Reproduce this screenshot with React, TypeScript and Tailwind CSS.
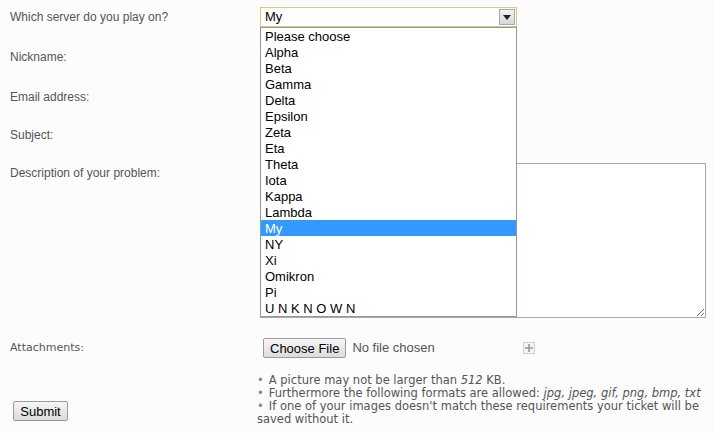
import React from "react";

const SERVERS = [
  "Please choose",
  "Alpha",
  "Beta",
  "Gamma",
  "Delta",
  "Epsilon",
  "Zeta",
  "Eta",
  "Theta",
  "Iota",
  "Kappa",
  "Lambda",
  "My",
  "NY",
  "Xi",
  "Omikron",
  "Pi",
  "U N K N O W N",
];

const labelCls =
  "w-[250px] shrink-0 pl-[10px] text-[12px] text-[#555] font-['Liberation_Sans',Arial,sans-serif]";

function Row({ label, className, children }: { label: string; className?: string; children?: React.ReactNode }) {
  return (
    <div className={`flex items-center ${className ?? ""}`}>
      <div className={labelCls}>{label}</div>
      <div className="flex-1">{children}</div>
    </div>
  );
}

function GreyButton({ children, className }: { children: React.ReactNode; className?: string }) {
  return (
    <button
      type="button"
      className={`h-[20px] rounded-[2px] border border-[#9a9a9a] bg-gradient-to-b from-[#f6f6f6] to-[#dcdcdc] px-[6px] text-[13px] leading-none text-black font-['Liberation_Sans',Arial,sans-serif] ${className ?? ""}`}
    >
      {children}
    </button>
  );
}

export default function App() {
  const selected = "My";

  return (
    <div className="relative h-[433px] w-[714px] overflow-hidden bg-[#fcfcfc] font-['Liberation_Sans',Arial,sans-serif]">
      <div className="flex flex-col pt-[7px]">
        {/* server select */}
        <Row label="Which server do you play on?" className="h-[20px]">
          <div className="relative ml-[10px] w-[257px]">
            <div className="flex h-[20px] items-center justify-between border border-[#e2c57a] bg-white pl-[4px] pr-[1px] text-[13px] text-black">
              <span>{selected}</span>
              <span className="flex h-[16px] w-[16px] items-center justify-center border border-[#a8a8a8] bg-gradient-to-b from-[#f4f4f4] to-[#d6d6d6]">
                <svg width="8" height="5" viewBox="0 0 8 5">
                  <path d="M0 0h8L4 5z" fill="#222" />
                </svg>
              </span>
            </div>

            {/* open option list, lies over the fields below */}
            <ul className="absolute left-0 top-[20px] z-10 w-[257px] border border-[#8a9aa8] bg-white text-[13px] text-black">
              {SERVERS.map((s) => (
                <li
                  key={s}
                  className={`flex h-[16px] items-center pl-[4px] pt-[1px] ${
                    s === selected ? "bg-[#3399ff] text-white" : ""
                  }`}
                >
                  {s}
                </li>
              ))}
            </ul>
          </div>
        </Row>

        <Row label="Nickname:" className="mt-[20px] h-[20px]">
          <input className="ml-[10px] h-[20px] w-[200px] border border-[#aaa] bg-white" />
        </Row>
        <Row label="Email address:" className="mt-[20px] h-[20px]">
          <input className="ml-[10px] h-[20px] w-[200px] border border-[#aaa] bg-white" />
        </Row>
        <Row label="Subject:" className="mt-[18px] h-[20px]">
          <input className="ml-[10px] h-[20px] w-[200px] border border-[#aaa] bg-white" />
        </Row>

        {/* description */}
        <div className="mt-[18px] flex items-start">
          <div className={`${labelCls} pt-[1px]`}>Description of your problem:</div>
          <textarea className="ml-[10px] h-[155px] w-[446px] resize border border-[#a9a9a9] bg-white" />
        </div>

        {/* attachments */}
        <div className="mt-[20px] flex h-[20px] items-center">
          <div className="w-[250px] shrink-0 pl-[10px] text-[11px] text-[#555] font-['DejaVu_Sans',Verdana,sans-serif]">
            Attachments:
          </div>
          <div className="ml-[13px] flex items-center">
            <GreyButton>Choose File</GreyButton>
            <span className="ml-[6px] text-[13px] text-[#555]">No file chosen</span>
            <span className="ml-[88px] flex h-[12px] w-[12px] items-center justify-center border border-[#cfcfcf] bg-[#f4f4f4]">
              <svg width="8" height="8" viewBox="0 0 8 8">
                <path d="M4 0v8M0 4h8" stroke="#9a9a9a" strokeWidth="1.6" />
              </svg>
            </span>
          </div>
        </div>

        {/* notes + submit */}
        <div className="mt-[16px] flex">
          <div className="flex w-[250px] shrink-0 items-end pb-[5px] pl-[13px]">
            <GreyButton className="w-[55px]">Submit</GreyButton>
          </div>
          <ul className="ml-[7px] w-[450px] text-[11.5px] leading-[13px] text-[#555] font-['DejaVu_Sans',Verdana,sans-serif]">
            <li>
              <span className="mr-[5px] text-[#888]">•</span>A picture may not be larger than <i>512</i> KB.
            </li>
            <li className="whitespace-nowrap">
              <span className="mr-[5px] text-[#888]">•</span>Furthermore the following formats are allowed:{" "}
              <i>jpg, jpeg, gif, png, bmp, txt</i>
            </li>
            <li>
              <span className="mr-[5px] text-[#888]">•</span>If one of your images doesn't match these requirements
              your ticket will be saved without it.
            </li>
          </ul>
        </div>
      </div>
    </div>
  );
}
